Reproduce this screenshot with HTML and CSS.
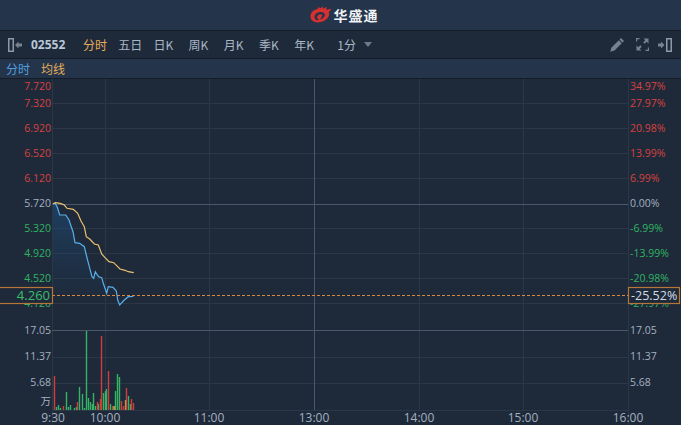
FILE: index.html
```html
<!DOCTYPE html>
<html lang="zh">
<head>
<meta charset="utf-8">
<title>02552</title>
<link rel="stylesheet" href="styles.css">
</head>
<body>
<header class="brand">
  <svg class="logo" width="22" height="17" viewBox="0 0 22 17">
    <path class="logo-red" d="M.5 10.500C.5 6.500 3.500 3.800 7.500 3L8.500 .8 10.200 2.600 12.500 .5 13.300 2.800 16.500 .8 16.300 3.800 21.500 2.800 18.800 6.300C20.500 10.500 16 15.500 9.500 16.300 4.500 17 .5 14.500 .5 10.500Z"/>
    <path class="logo-cut" d="M4.500 10.500C5 7.300 8.800 5.600 12 6.200 15.200 6.800 15.800 9.600 13.600 11.600L10.200 14 11.400 10.800C12.800 10.300 13 8.500 11 8.300 9 8.100 7.400 9.300 7.100 11 6.900 12.300 7.800 13 9 13.100L7.400 14.400C5.700 14.100 4.300 12.400 4.500 10.500Z"/>
  </svg>
  <span class="brand-name">华盛通</span>
</header>
<nav class="toolbar">
  <svg class="tool-icon" width="14" height="14" viewBox="0 0 14 14">
    <path class="ic-bright" d="M0 0H6V14H0ZM1.500 1.500V12.500H4.500V1.500Z" fill-rule="evenodd"/>
    <path class="ic-fill" d="M7 7L10.500 3.500V5.500H14V8.500H10.500V10.500Z"/>
  </svg>
  <span class="code">02552</span>
  <ul class="periods">
    <li class="period active">分时</li>
    <li class="period">五日</li>
    <li class="period">日K</li>
    <li class="period">周K</li>
    <li class="period">月K</li>
    <li class="period">季K</li>
    <li class="period">年K</li>
  </ul>
  <span class="minute">1分</span>
  <span class="caret"></span>
  <div class="tools">
    <svg class="pencil" width="14" height="14" viewBox="0 0 14 14"><path class="ic-fill" d="M11 0L14 3 12.500 4.500 9.500 1.500ZM8.800 2.200L11.800 5.200 4.500 12.500 .2 13.800 1.500 9.500Z"/></svg>
    <svg width="13" height="13" viewBox="0 0 13 13">
      <path class="ic-fill" d="M7.500 .5H12.500V5.500L10.700 3.700 8.700 5.700 7.300 4.300 9.300 2.300ZM5.500 12.500H.5V7.500L2.300 9.300 4.300 7.300 5.700 8.700 3.700 10.700ZM0 0H3.500V1.200H1.200V3.500H0ZM13 13H9.500V11.800H11.800V9.500H13Z"/>
    </svg>
    <svg width="14" height="14" viewBox="0 0 14 14">
      <path class="ic-fill" d="M0 5.500H3V3.500L6.500 7 3 10.500V8.500H0Z"/>
      <path class="ic-bright" d="M8 0H14V14H8ZM9.500 1.500V12.500H12.500V1.500Z" fill-rule="evenodd"/>
    </svg>
  </div>
</nav>
<div class="legend">
  <span class="legend-price">分时</span>
  <span class="legend-avg">均线</span>
</div>
<svg class="chart" width="681" height="346" viewBox="0 79 681 346">
  <defs>
    <linearGradient id="area" x1="0" y1="0" x2="0" y2="1">
      <stop offset="0" stop-color="#1f5c96" stop-opacity=".42"/>
      <stop offset="1" stop-color="#1f4a78" stop-opacity="0"/>
    </linearGradient>
  </defs>
  <g class="grid">
    <path d="M52.500 79V425M105.500 79V410M209.500 79V410M419.500 79V410M523.500 79V410M628.500 79V425"/>
    <path d="M52 103.500H628M52 128.500H628M52 153.500H628M52 178.500H628M52 228.500H628M52 253.500H628M52 278.500H628M52 303.500H628M52 357.500H628M52 383.500H628M52 410.500H628"/>
  </g>
  <g class="grid-strong">
    <path d="M314.500 79V410M52 204.500H628M52 330.500H628"/>
  </g>
  <path fill="url(#area)" d="M53 204L55 203 57.300 207.300 59.700 215 65.700 215 69 220 73 231.700 75 242.700 79.700 243.300 84.300 246.700 86.300 255 89.300 266.700 92 276.700 93.700 278.300 95.300 271.700 97.300 275 98.700 276.700 101.700 277.700 103.300 283.300 106.700 293.300 108.300 286.700 113 287.300 116.300 291 117.700 300 119.700 305 124.300 300 128.300 296.700 131.700 296.700 133.700 295.700V296H53Z"/>
  <path class="line-price" d="M53 204L55 203 57.300 207.300 59.700 215 65.700 215 69 220 73 231.700 75 242.700 79.700 243.300 84.300 246.700 86.300 255 89.300 266.700 92 276.700 93.700 278.300 95.300 271.700 97.300 275 98.700 276.700 101.700 277.700 103.300 283.300 106.700 293.300 108.300 286.700 113 287.300 116.300 291 117.700 300 119.700 305 124.300 300 128.300 296.700 131.700 296.700 133.700 295.700"/>
  <path class="line-avg" d="M53 203.700L55.700 202.700 61 203.700 64.300 205 67 208.300 73.300 209.300 77.700 213.300 81 221 84.300 226.700 86.300 236.700 90 239.300 94.300 244 98.300 245 101.700 254 105 257.700 109 261.700 113.700 262.700 120 269 125 270.300 128.300 271.700 133.700 272.700"/>
  <path class="bars-green" d="M56.500 410V407M58.500 410V405M60.500 410V408M66.500 410V392M68.500 410V407M70.500 410V405M74.500 410V408M76.500 410V407M79.500 410V387M82.500 410V394M84.500 410V408M86.500 410V331M88.500 410V398M90.500 410V402M92.500 410V404M93.500 410V393M95.500 410V406M98.500 410V404M103.500 410V393M105.500 410V391M106.500 410V389M110.500 410V404M113.500 410V406M115.500 410V391M117.500 410V374M119.500 410V377M128.500 410V396M130.500 410V404"/>
  <path class="bars-red" d="M54.500 410V376M63.500 410V406M77.500 410V402M97.500 410V402M100.500 410V399M101.500 410V336M108.500 410V371M112.500 410V406M121.500 410V401M123.500 410V406M126.500 410V388M131.500 410V399M133.500 410V403"/>
  <path class="bars-orange" d="M114.500 410V406M125.500 410V400"/>
  <path class="price-line" d="M52 295.500H628"/>
  <g class="lbl lbl-left">
    <text class="up" x="51" y="90">7.720</text>
    <text class="up" x="51" y="107">7.320</text>
    <text class="up" x="51" y="132">6.920</text>
    <text class="up" x="51" y="157">6.520</text>
    <text class="up" x="51" y="182">6.120</text>
    <text class="flat" x="51" y="207">5.720</text>
    <text class="down" x="51" y="232">5.320</text>
    <text class="down" x="51" y="257">4.920</text>
    <text class="down" x="51" y="282">4.520</text>
    <text class="down" x="51" y="307">4.120</text>
    <text class="flat" x="51" y="334">17.05</text>
    <text class="flat" x="51" y="360">11.37</text>
    <text class="flat" x="51" y="386">5.68</text>
    <text class="flat" x="51" y="405">万</text>
  </g>
  <g class="lbl">
    <text class="up" x="630" y="90">34.97%</text>
    <text class="up" x="630" y="107">27.97%</text>
    <text class="up" x="630" y="132">20.98%</text>
    <text class="up" x="630" y="157">13.99%</text>
    <text class="up" x="630" y="182">6.99%</text>
    <text class="flat" x="630" y="207">0.00%</text>
    <text class="down" x="630" y="232">-6.99%</text>
    <text class="down" x="630" y="257">-13.99%</text>
    <text class="down" x="630" y="282">-20.98%</text>
    <text class="down" x="630" y="307">-27.97%</text>
    <text class="flat" x="630" y="334">17.05</text>
    <text class="flat" x="630" y="360">11.37</text>
    <text class="flat" x="630" y="386">5.68</text>
  </g>
  <g class="axis">
    <text x="53" y="422">9:30</text>
    <text x="105" y="422">10:00</text>
    <text x="209" y="422">11:00</text>
    <text x="314" y="422">13:00</text>
    <text x="419" y="422">14:00</text>
    <text x="523" y="422">15:00</text>
    <text x="628" y="422">16:00</text>
  </g>
  <rect class="tag" x="-1.500" y="287.500" width="54" height="16"/>
  <text class="tag-left" x="50" y="300">4.260</text>
  <rect class="tag" x="628.500" y="287.500" width="51" height="16"/>
  <text class="tag-right" x="631" y="300">-25.52%</text>
</svg>
</body>
</html>
```
FILE: styles.css
```css
* { box-sizing: border-box; }
html, body { margin: 0; padding: 0; }
body {
  width: 681px;
  height: 425px;
  overflow: hidden;
  background: #1e2a3a;
  font-family: "Open Sans", "Noto Sans CJK SC", sans-serif;
  font-size: 12px;
  color: #b6c2d2;
}
.brand {
  height: 31px;
  background: #24344a;
  border-bottom: 1px solid #141c27;
  display: flex;
  align-items: center;
  justify-content: center;
  gap: 2px;
  padding: 0 0 1px 7px;
}
.logo-red { fill: #d8302f; }
.logo-cut { fill: #24344a; }
.brand-name {
  font-family: "Noto Sans CJK SC", sans-serif;
  font-weight: 700;
  font-size: 14px;
  letter-spacing: 1px;
  color: #eef1f5;
}
.toolbar {
  height: 28px;
  background: #1e2a3a;
  border-bottom: 1px solid #141c27;
  display: flex;
  align-items: center;
  padding-left: 8px;
}
.ic-fill { fill: #77828f; }
.ic-bright { fill: #8e99a7; }
.code {
  margin-left: 9px;
  width: 52px;
  font-weight: 700;
  font-size: 12px;
  color: #b9c6d6;
}
.periods {
  list-style: none;
  display: flex;
  margin: 0;
  padding: 0;
}
.period {
  width: 35.200px;
  white-space: nowrap;
  font-family: "Noto Sans CJK SC", sans-serif;
  font-size: 12px;
  color: #aab7c6;
}
.period.active { color: #e8ac5c; }
.minute {
  margin-left: 8px;
  font-family: "Noto Sans CJK SC", sans-serif;
  color: #aab7c6;
}
.caret {
  margin-left: 8px;
  border: 4px solid transparent;
  border-top: 5px solid #6f7b89;
  border-bottom: 0;
}
.tools {
  margin-left: auto;
  margin-right: 9px;
  display: flex;
  align-items: center;
  gap: 9px;
}
.pencil { margin-right: 3px; }
.legend {
  height: 20px;
  background: #24344a;
  border-bottom: 1px solid #141c27;
  display: flex;
  align-items: center;
  gap: 11px;
  padding-left: 6px;
  font-family: "Noto Sans CJK SC", sans-serif;
  font-size: 12px;
}
.legend-price { color: #4f9fe0; }
.legend-avg { color: #e3ad5a; }
.chart { display: block; }
.grid path { fill: none; stroke: #2a3747; stroke-width: 1; }
.grid-strong path { fill: none; stroke: #4b586a; stroke-width: 1; }
.line-price { fill: none; stroke: #5aaeea; stroke-width: 1.200; }
.line-avg { fill: none; stroke: #ecc16e; stroke-width: 1.200; }
.bars-green, .bars-red, .bars-orange { fill: none; stroke-width: 1.400; }
.bars-green { stroke: #35b463; }
.bars-red { stroke: #d23c3c; }
.bars-orange { stroke: #c98a3c; }
.price-line { fill: none; stroke: #d98a3c; stroke-width: 1.200; stroke-dasharray: 3 2; }
.lbl text { font-size: 10.500px; font-family: "Open Sans", "Noto Sans CJK SC", sans-serif; }
.lbl-left text { text-anchor: end; }
.up { fill: #d9413f; }
.down { fill: #2fb562; }
.flat { fill: #a4b0c0; }
.axis text {
  font-size: 12px;
  text-anchor: middle;
  fill: #a4b0c0;
}
.tag { fill: #1e2a3a; stroke: #b5763a; stroke-width: 1.200; }
.tag-left { font-size: 13px; text-anchor: end; fill: #39bd6b; }
.tag-right { font-size: 12.500px; fill: #d5dde6; }
```
